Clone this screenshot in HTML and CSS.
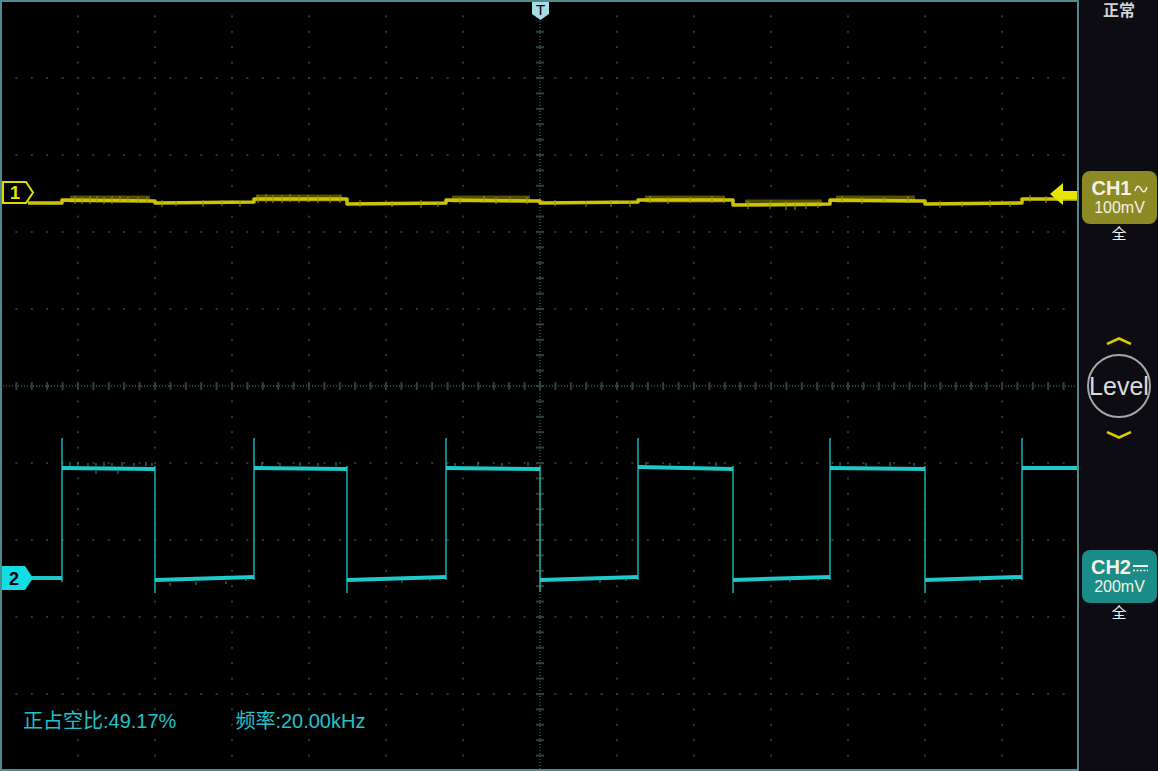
FILE: index.html
```html
<!DOCTYPE html>
<html lang="zh-CN">
<head>
    <meta charset="UTF-8">
    <title>示波器</title>
    <link rel="stylesheet" href="styles.css">
</head>
<body>
    <div class="scope">
        <div class="screen">
            <svg class="plot" width="1080" height="771" viewBox="0 0 1080 771">
                <defs>
                    <pattern id="vdots" x="0" y="0" width="77" height="15.4" patternUnits="userSpaceOnUse">
                        <rect x="0" y="0" width="2" height="2" fill="#2c3833"/>
                    </pattern>
                    <pattern id="hdots" x="0" y="0" width="15.4" height="77" patternUnits="userSpaceOnUse">
                        <rect x="0" y="0" width="2" height="2" fill="#2c3833"/>
                    </pattern>
                    <pattern id="hcenter" x="0" y="0" width="3" height="2" patternUnits="userSpaceOnUse">
                        <rect x="0" y="0" width="1" height="2" fill="#2a423a"/>
                    </pattern>
                    <pattern id="vcenter" x="0" y="0" width="2" height="3" patternUnits="userSpaceOnUse">
                        <rect x="0" y="0" width="2" height="1" fill="#2a423a"/>
                    </pattern>
                    <pattern id="hticks" x="0" y="0" width="15.4" height="8" patternUnits="userSpaceOnUse">
                        <rect x="0" y="0" width="2" height="8" fill="#2a423a"/>
                    </pattern>
                    <pattern id="vticks" x="0" y="0" width="8" height="15.4" patternUnits="userSpaceOnUse">
                        <rect x="0" y="0" width="8" height="2" fill="#2a423a"/>
                    </pattern>
                </defs>

                <!-- grid -->
                <rect x="2" y="2" width="1076" height="767" fill="url(#vdots)"/>
                <rect x="2" y="2" width="1076" height="767" fill="url(#hdots)"/>
                <rect x="2" y="385" width="1076" height="2" fill="url(#hcenter)"/>
                <rect x="539" y="2" width="2" height="767" fill="url(#vcenter)"/>
                <rect x="2" y="382" width="1076" height="8" fill="url(#hticks)"/>
                <rect x="536" y="2" width="8" height="767" fill="url(#vticks)"/>

                <!-- CH1 trace -->
                <g class="ch1-trace">
                    <path class="fuzz" d="M70 199 H150 M256 198 H342 M452 199 H530 M645 199 H725 M745 203 H822 M836 199 H915"/>
                    <path class="trace" d="M28 203 L62 203 L62 200 L155 201 L155 203 L254 202 L254 199 L347 199 L347 204 L446 203 L446 200 L540 201 L540 203 L638 202 L638 200 L733 200 L733 205 L830 204 L830 200 L925 201 L925 204 L1022 203 L1022 199 L1078 199"/>
                    <path class="noise" d="M75 196v8M82 197v7M90 196v8M97 196v7M104 197v7M112 196v8M120 196v7M128 197v6M138 197v6M147 197v6
                        M162 200v7M176 201v5M203 200v7M222 200v6M240 201v6
                        M258 195v8M266 194v9M273 195v8M282 195v8M290 194v8M299 195v8M308 195v7M318 196v7M330 196v7M340 196v7
                        M360 200v7M392 201v6M421 200v8M438 201v6
                        M460 197v7M484 196v7M496 197v7M510 197v6M527 197v7
                        M555 200v6M586 201v6M611 200v7M630 201v6
                        M650 196v7M668 197v7M690 197v6M712 196v7M724 197v6
                        M748 201v8M770 202v7M786 201v9M795 202v8M806 202v7M818 201v7
                        M842 196v7M862 197v7M884 197v6M908 196v7
                        M940 201v7M962 201v6M990 200v7M1010 201v6
                        M1030 195v7M1046 196v7"/>
                </g>

                <!-- CH2 trace -->
                <g class="ch2-trace">
                    <path class="edge" d="M62 582 V438 M254 580 V438 M446 580 V438 M638 580 V438 M830 580 V438 M1022 580 V438"/>
                    <path class="edge" d="M155 466 V593 M347 466 V593 M540 466 V592 M733 466 V593 M925 466 V593"/>
                    <path class="trace" d="M28 578 L62 578"/>
                    <path class="trace" d="M62 468 L155 469"/>
                    <path class="trace" d="M155 580 L254 577"/>
                    <path class="trace" d="M254 468 L347 469"/>
                    <path class="trace" d="M347 580 L446 577"/>
                    <path class="trace" d="M446 468 L540 469"/>
                    <path class="trace" d="M540 580 L638 577"/>
                    <path class="trace" d="M638 467 L733 469"/>
                    <path class="trace" d="M733 580 L830 577"/>
                    <path class="trace" d="M830 468 L925 469"/>
                    <path class="trace" d="M925 580 L1022 577"/>
                    <path class="trace" d="M1022 468 L1078 468"/>
                    <path class="noise" d="M70 462v4M78 462v4M88 463v3M96 463v3M104 462v4M112 463v3M122 462v4M134 463v3M146 462v4M152 463v3
                        M96 471v3M118 471v3M262 462v4M280 463v3M300 462v4M318 463v3M336 462v4
                        M455 463v3M478 462v4M502 463v3M528 462v4M646 462v4M670 463v3M694 462v4M716 462v4
                        M840 462v4M866 463v3M890 462v4M914 463v3
                        M170 583v3M196 582v3M226 581v3M246 578v3M402 580v3M430 578v3M600 580v3M626 578v3M790 579v3M818 578v3M980 580v3M1012 578v3"/>
                </g>

                <!-- trigger level arrow -->
                <path class="trig-arrow" d="M1050 194 L1063 183 L1063 191 L1078 191 L1078 199 L1063 199 L1063 205 Z"/>

                <!-- channel markers -->
                <path class="marker1" d="M3 182 H26 L33 192.5 L26 203 H3 Z"/>
                <text class="marker-text m1" x="15" y="199">1</text>
                <path class="marker2" d="M1 566 H25 L33 578 L25 590 H1 Z"/>
                <text class="marker-text m2" x="14" y="585">2</text>

                <!-- trigger position marker -->
                <path class="tmark" d="M532 2 H549 V14 L540.5 20 L532 14 Z"/>
                <text class="tmark-text" x="540.5" y="15">T</text>

                <!-- frame -->
                <rect class="frame" x="1" y="1" width="1077" height="769"/>
            </svg>

            <div class="measure">
                <span>正占空比:49.17%</span>
                <span>频率:20.00kHz</span>
            </div>
        </div>

        <aside class="side">
            <div class="mode">正常</div>

            <div class="ch-box ch1">
                <div class="ch-name">CH1
                    <svg class="coupling" width="14" height="10" viewBox="0 0 14 10">
                        <path d="M1 7 C3 1, 5 1, 7 5 S11 9, 13 3" fill="none" stroke="currentColor" stroke-width="1.5"/>
                    </svg>
                </div>
                <div class="ch-scale">100mV</div>
            </div>
            <div class="bw">全</div>

            <div class="level">
                <svg class="chev" width="26" height="8" viewBox="0 0 26 8">
                    <path d="M1 7 L13 1.5 L25 7" fill="none" stroke="#d6cc00" stroke-width="2.5"/>
                </svg>
                <div class="knob">Level</div>
                <svg class="chev down" width="26" height="8" viewBox="0 0 26 8">
                    <path d="M1 1 L13 6.5 L25 1" fill="none" stroke="#d6cc00" stroke-width="2.5"/>
                </svg>
            </div>

            <div class="ch-box ch2">
                <div class="ch-name">CH2
                    <svg class="coupling" width="15" height="8" viewBox="0 0 15 8">
                        <rect x="0" y="1" width="15" height="2" fill="currentColor"/>
                        <path d="M0 6.5 H15" stroke="currentColor" stroke-width="1.5" stroke-dasharray="2 1.5"/>
                    </svg>
                </div>
                <div class="ch-scale">200mV</div>
            </div>
            <div class="bw">全</div>
        </aside>
    </div>
</body>
</html>
```

FILE: styles.css
```css
body {
    margin: 0;
    background: #0d0c12;
    font-family: 'Liberation Sans', 'Noto Sans CJK SC', sans-serif;
    color: #e0e0e0;
}

.scope {
    display: flex;
    width: 1158px;
    height: 771px;
    overflow: hidden;
}

.screen {
    position: relative;
    width: 1080px;
    height: 771px;
    background: #000;
    flex: none;
}

.plot {
    display: block;
}

.frame {
    fill: none;
    stroke: #4f8a8e;
    stroke-width: 2;
}

.trace {
    fill: none;
    stroke-linejoin: round;
}

.ch1-trace .trace {
    stroke: #cdc500;
    stroke-width: 3.5;
}

.ch1-trace .fuzz {
    stroke: #8a8400;
    stroke-width: 7;
    opacity: 0.6;
}

.ch1-trace .noise {
    stroke: #9c9600;
    stroke-width: 1;
}

.ch2-trace .trace {
    stroke: #1fc8c9;
    stroke-width: 4;
}

.ch2-trace .edge {
    stroke: #1aaeb0;
    stroke-width: 1.5;
}

.ch2-trace .noise {
    stroke: #159ea0;
    stroke-width: 1;
}

.trig-arrow {
    fill: #e6e600;
}

.marker1 {
    fill: #000;
    stroke: #e0dc00;
    stroke-width: 2;
}

.marker2 {
    fill: #12dde4;
}

.marker-text {
    font-family: 'Liberation Sans', sans-serif;
    font-weight: bold;
    font-size: 18px;
    text-anchor: middle;
}

.m1 {
    fill: #e6e200;
}

.m2 {
    fill: #000;
}

.tmark {
    fill: #a6dce4;
}

.tmark-text {
    font-family: 'DejaVu Sans', sans-serif;
    font-size: 14px;
    fill: #000;
    text-anchor: middle;
}

.measure {
    position: absolute;
    left: 23px;
    top: 709px;
    display: flex;
    gap: 59px;
    font-size: 20px;
    color: #22c2ca;
    line-height: 24px;
}

.side {
    flex: 1;
    display: flex;
    flex-direction: column;
    align-items: center;
}

.mode {
    margin-top: 2px;
    font-size: 16px;
    font-weight: bold;
    line-height: 18px;
    color: #d2d2d2;
}

.ch-box {
    width: 75px;
    height: 53px;
    margin-left: 1px;
    box-sizing: border-box;
    border-radius: 8px;
    display: flex;
    flex-direction: column;
    align-items: center;
    justify-content: center;
    color: #f4f2e4;
}

.ch1 {
    margin-top: 151px;
    background: #8b8a24;
}

.ch2 {
    margin-top: 111px;
    background: #1b8c87;
}

.ch-name {
    display: flex;
    align-items: center;
    gap: 2px;
    font-size: 20px;
    font-weight: bold;
    line-height: 21px;
}

.ch-scale {
    font-size: 16px;
    line-height: 18px;
}

.bw {
    font-size: 15px;
    line-height: 18px;
    margin-top: 1px;
    color: #f0f0f0;
}

.level {
    margin-top: 94px;
    display: flex;
    flex-direction: column;
    align-items: center;
}

.chev {
    display: block;
}

.knob {
    margin-top: 9px;
    width: 64px;
    height: 64px;
    box-sizing: border-box;
    border: 2px solid #a6a6a6;
    border-radius: 50%;
    display: flex;
    align-items: center;
    justify-content: center;
    font-size: 25px;
    color: #dcdcdc;
}

.chev.down {
    margin-top: 13px;
}
```
